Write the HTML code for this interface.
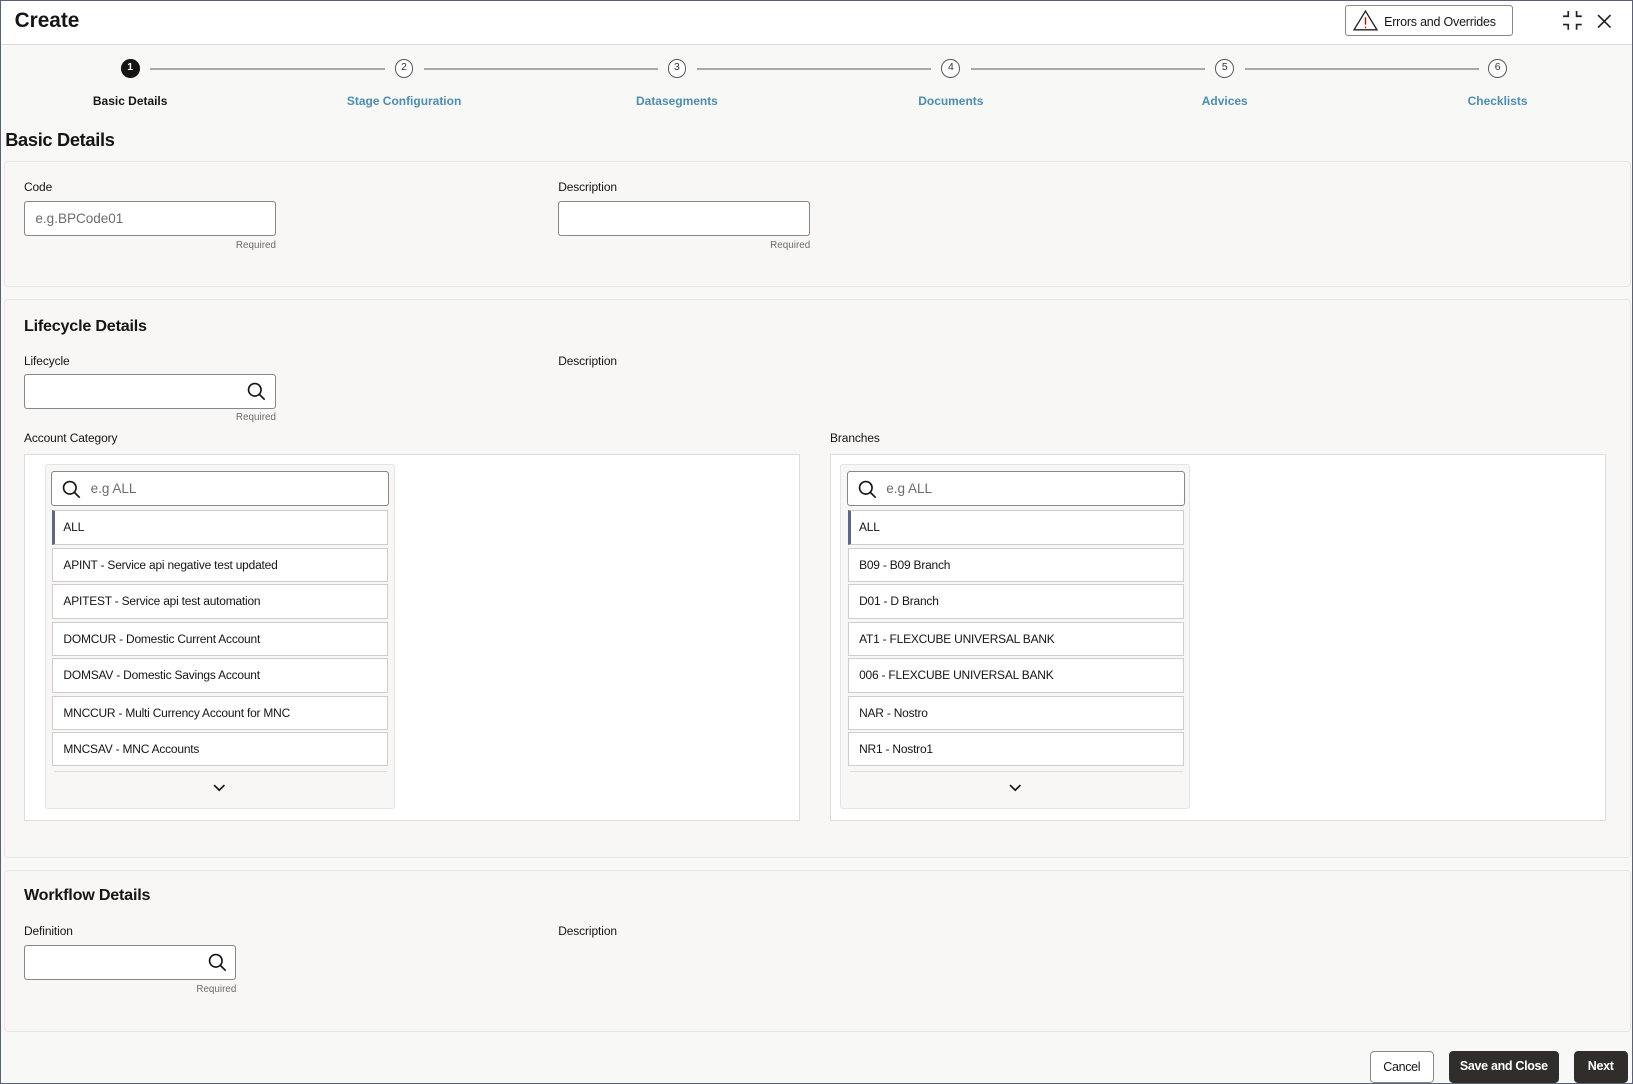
<!DOCTYPE html>
<html><head><meta charset="utf-8">
<style>
html,body{margin:0;padding:0}
body{width:1568px;height:1041px;zoom:1.04145;overflow:hidden;font-family:"Liberation Sans",sans-serif;color:#161513;background:#f7f7f6;position:relative}
.frame{position:absolute;left:0;top:0;width:1566px;height:1039px;border:1px solid #59607a;background:#f8f8f7}
.abs{position:absolute}
.hdr{left:1px;top:1px;width:1566px;height:41px;background:#fff;border-bottom:1px solid #dcdbd8}
.lbl{font-size:11.5px;color:#161513;letter-spacing:-0.1px}
.req{font-size:9.5px;color:#6f6c68;text-align:right}
.inp{background:#fff;border:1px solid #8a8885;border-radius:3px;box-sizing:border-box}
.panel{background:#f8f7f5;border:1px solid #e9e7e4;border-radius:4px;box-sizing:border-box}
.step{width:18px;height:18px;border:1.5px solid #5c5a57;border-radius:50%;box-sizing:border-box;font-size:10px;text-align:center;line-height:15px;background:#fff;color:#333}
.sl{font-size:11.5px;font-weight:bold;color:#4c8db0;text-align:center;width:200px}
.line{height:2px;background:#a9a8a5;top:65px}
.item{left:6px;width:323px;height:33px;background:#fff;border:1px solid #cfcdca;box-sizing:border-box;font-size:11.5px;line-height:31px;padding-left:10px;letter-spacing:-0.2px}
.btn{border-radius:4px;font-size:12px;font-weight:bold;text-align:center;line-height:30px;height:31px;box-sizing:border-box;letter-spacing:-0.3px}
</style></head><body>
<div class="frame"></div>
<div class="abs hdr"></div>
<div class="abs" style="left:14px;top:9px;font-size:20px;font-weight:bold">Create</div>
<div class="abs" style="left:1291px;top:5px;width:162px;height:30px;border:1px solid #8a8885;border-radius:3px;box-sizing:border-box;background:#fff"></div>
<svg class="abs" style="left:1299px;top:10px" width="24" height="20" viewBox="0 0 24 20"><path d="M12 1 L23 19 H1 Z" fill="none" stroke="#222" stroke-width="1.3"/><path d="M12 7v7M12 16v1.5" stroke="#c00" stroke-width="1.3"/></svg>
<div class="abs" style="left:1329px;top:14px;font-size:12px;letter-spacing:-0.2px">Errors and Overrides</div>
<svg class="abs" style="left:1500px;top:10px" width="20" height="20" viewBox="0 0 20 20" fill="none" stroke="#222" stroke-width="1.6"><path d="M6 1v5H1M14 1v5h5M6 19v-5H1M14 19v-5h5"/></svg>
<svg class="abs" style="left:1533px;top:13px" width="14" height="14" viewBox="0 0 14 14" stroke="#222" stroke-width="1.6"><path d="M1 1L13 13M13 1L1 13"/></svg>

<div class="abs line" style="left:144px;width:226px"></div>
<div class="abs line" style="left:407px;width:225px"></div>
<div class="abs line" style="left:669px;width:225px"></div>
<div class="abs line" style="left:932px;width:225px"></div>
<div class="abs line" style="left:1195px;width:225px"></div>
<div class="abs step" style="left:116px;top:57px;background:#161513;border-color:#161513;color:#fff;font-weight:bold">1</div>
<div class="abs step" style="left:379px;top:57px">2</div>
<div class="abs step" style="left:641px;top:57px">3</div>
<div class="abs step" style="left:904px;top:57px">4</div>
<div class="abs step" style="left:1167px;top:57px">5</div>
<div class="abs step" style="left:1429px;top:57px">6</div>
<div class="abs sl" style="left:25px;top:90px;color:#161513">Basic Details</div>
<div class="abs sl" style="left:288px;top:90px">Stage Configuration</div>
<div class="abs sl" style="left:550px;top:90px">Datasegments</div>
<div class="abs sl" style="left:813px;top:90px">Documents</div>
<div class="abs sl" style="left:1076px;top:90px">Advices</div>
<div class="abs sl" style="left:1338px;top:90px">Checklists</div>

<div class="abs" style="left:5px;top:125px;font-size:17.5px;font-weight:bold;letter-spacing:-0.3px">Basic Details</div>

<div class="abs panel" style="left:4px;top:155px;width:1562px;height:121px"></div>
<div class="abs lbl" style="left:23px;top:173px">Code</div>
<div class="abs inp" style="left:23px;top:193px;width:242px;height:34px"></div>
<div class="abs" style="left:34px;top:203px;font-size:13px;color:#6f6c68">e.g.BPCode01</div>
<div class="abs req" style="left:165px;top:230px;width:100px">Required</div>
<div class="abs lbl" style="left:536px;top:173px">Description</div>
<div class="abs inp" style="left:536px;top:193px;width:242px;height:34px"></div>
<div class="abs req" style="left:678px;top:230px;width:100px">Required</div>

<div class="abs panel" style="left:4px;top:287px;width:1562px;height:537px"></div>
<div class="abs" style="left:23px;top:304px;font-size:15.5px;font-weight:bold;letter-spacing:-0.2px">Lifecycle Details</div>
<div class="abs lbl" style="left:23px;top:340px">Lifecycle</div>
<div class="abs inp" style="left:23px;top:359px;width:242px;height:34px"></div>
<svg class="abs" style="left:237px;top:367px" width="18" height="18" viewBox="0 0 18 18" fill="none" stroke="#161513" stroke-width="1.6"><circle cx="7.5" cy="7.5" r="6"/><path d="M12 12l5 5"/></svg>
<div class="abs req" style="left:165px;top:396px;width:100px">Required</div>
<div class="abs lbl" style="left:536px;top:340px">Description</div>

<div class="abs lbl" style="left:23px;top:414px">Account Category</div>
<div class="abs" style="left:23px;top:436px;width:745px;height:352px;background:#fff;border:1px solid #e0dedb;box-sizing:border-box"></div>
<div class="abs" style="left:43px;top:446px;width:336px;height:331px;background:#f8f7f5;border:1px solid #e6e4e1;border-radius:3px;box-sizing:border-box">
 <div class="abs inp" style="left:5px;top:5px;width:325px;height:34px"></div>
 <svg class="abs" style="left:16px;top:14px" width="18" height="18" viewBox="0 0 18 18" fill="none" stroke="#161513" stroke-width="1.6"><circle cx="7.5" cy="7.5" r="6"/><path d="M12 12l5 5"/></svg>
 <div class="abs" style="left:43px;top:15px;font-size:13px;color:#6f6c68">e.g ALL</div>
 <div class="abs item" style="top:43px;border-left:3px solid #5f6787;padding-left:8px">ALL</div>
 <div class="abs item" style="top:79px">APINT - Service api negative test updated</div>
 <div class="abs item" style="top:114px">APITEST - Service api test automation</div>
 <div class="abs item" style="top:150px">DOMCUR - Domestic Current Account</div>
 <div class="abs item" style="top:185px">DOMSAV - Domestic Savings Account</div>
 <div class="abs item" style="top:221px">MNCCUR - Multi Currency Account for MNC</div>
 <div class="abs item" style="top:256px">MNCSAV - MNC Accounts</div>
 <div class="abs" style="left:8px;top:293px;width:320px;height:1px;background:#e0dedb"></div>
 <svg class="abs" style="left:161px;top:306px" width="12" height="8" viewBox="0 0 12 8" fill="none" stroke="#161513" stroke-width="1.6"><path d="M1 1l5 5 5-5"/></svg>
</div>

<div class="abs lbl" style="left:797px;top:414px">Branches</div>
<div class="abs" style="left:797px;top:436px;width:745px;height:352px;background:#fff;border:1px solid #e0dedb;box-sizing:border-box"></div>
<div class="abs" style="left:807px;top:446px;width:336px;height:331px;background:#f8f7f5;border:1px solid #e6e4e1;border-radius:3px;box-sizing:border-box">
 <div class="abs inp" style="left:5px;top:5px;width:325px;height:34px"></div>
 <svg class="abs" style="left:16px;top:14px" width="18" height="18" viewBox="0 0 18 18" fill="none" stroke="#161513" stroke-width="1.6"><circle cx="7.5" cy="7.5" r="6"/><path d="M12 12l5 5"/></svg>
 <div class="abs" style="left:43px;top:15px;font-size:13px;color:#6f6c68">e.g ALL</div>
 <div class="abs item" style="top:43px;border-left:3px solid #5f6787;padding-left:8px">ALL</div>
 <div class="abs item" style="top:79px">B09 - B09 Branch</div>
 <div class="abs item" style="top:114px">D01 - D Branch</div>
 <div class="abs item" style="top:150px">AT1 - FLEXCUBE UNIVERSAL BANK</div>
 <div class="abs item" style="top:185px">006 - FLEXCUBE UNIVERSAL BANK</div>
 <div class="abs item" style="top:221px">NAR - Nostro</div>
 <div class="abs item" style="top:256px">NR1 - Nostro1</div>
 <div class="abs" style="left:8px;top:293px;width:320px;height:1px;background:#e0dedb"></div>
 <svg class="abs" style="left:161px;top:306px" width="12" height="8" viewBox="0 0 12 8" fill="none" stroke="#161513" stroke-width="1.6"><path d="M1 1l5 5 5-5"/></svg>
</div>

<div class="abs panel" style="left:4px;top:835px;width:1562px;height:156px"></div>
<div class="abs" style="left:23px;top:851px;font-size:15.5px;font-weight:bold;letter-spacing:-0.2px">Workflow Details</div>
<div class="abs lbl" style="left:23px;top:887px">Definition</div>
<div class="abs inp" style="left:23px;top:907px;width:204px;height:34px"></div>
<svg class="abs" style="left:200px;top:915px" width="18" height="18" viewBox="0 0 18 18" fill="none" stroke="#161513" stroke-width="1.6"><circle cx="7.5" cy="7.5" r="6"/><path d="M12 12l5 5"/></svg>
<div class="abs req" style="left:127px;top:945px;width:100px">Required</div>
<div class="abs lbl" style="left:536px;top:887px">Description</div>

<div class="abs btn" style="left:1315px;top:1009px;width:62px;background:#fff;border:1px solid #8a8885;color:#161513;font-weight:normal">Cancel</div>
<div class="abs btn" style="left:1391px;top:1009px;width:106px;background:#312d2a;color:#fff">Save and Close</div>
<div class="abs btn" style="left:1511px;top:1009px;width:52px;background:#312d2a;color:#fff">Next</div>
</body></html>
